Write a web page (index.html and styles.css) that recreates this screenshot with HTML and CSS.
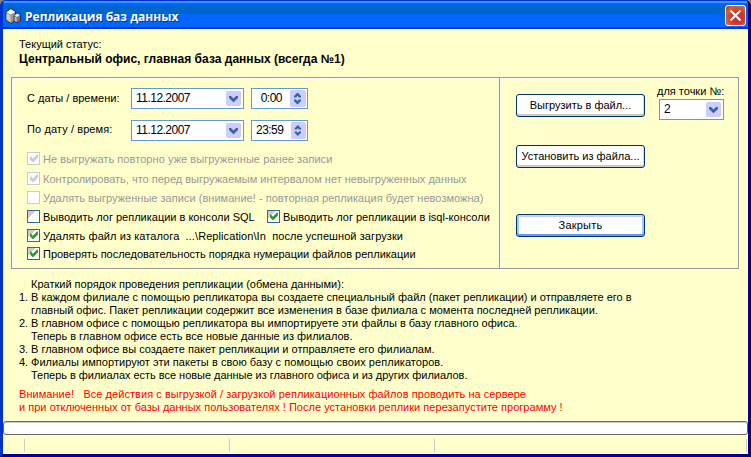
FILE: index.html
```html
<!DOCTYPE html>
<html lang="ru">
<head>
<meta charset="utf-8">
<title>Репликация баз данных</title>
<link rel="stylesheet" href="styles.css">
</head>
<body>
<svg width="0" height="0" class="defs">
  <symbol id="tick" viewBox="0 0 13 13"><path d="M3 4.500v3l2.500 2.500h1l4.500-4.500v-3h-1L5.900 6.700 4 4.500z" fill="currentColor"/></symbol>
  <symbol id="arrow" viewBox="0 0 15 15"><path d="M3 5h2l2.500 2.500L10 5h2v2L7.500 11.300 3 7z" fill="#336699"/></symbol>
  <symbol id="spin" viewBox="0 0 16 16"><path d="M7.500 2L11 5.500V7H9L7.500 5.500 6 7H4V5.500zM7.500 14L11 10.500V9H9L7.500 10.500 6 9H4v1.500z" fill="#336699"/></symbol>
</svg>
<div class="window">
  <header class="titlebar">
    <svg class="app-icon" width="16" height="16" viewBox="0 0 16 16">
      <path d="M1 4.500L5.500 .5l5 3V12L6 15.500 1 12z" fill="#999" stroke="#222" stroke-width=".8"/>
      <path d="M1.500 4.500L5.500 1.200l4.500 2.500L6 6.500z" fill="#fff"/>
      <path d="M1.500 5.500L5.500 7.500v7l-4-3z" fill="#ccc"/>
      <path d="M9 7.500l3-2.500 3.500 2v5.500L12 15l-3-2z" fill="#777" stroke="#222" stroke-width=".8"/>
      <path d="M9.500 7.500L12 5.500l3 1.500-3 2z" fill="#eee"/>
      <path d="M9.500 8.500l2.200 1.200v4.500L9.500 12.800z" fill="#bbb"/>
    </svg>
    <h1>Репликация баз данных</h1>
    <button class="close" aria-label="Закрыть окно"><svg width="19" height="19" viewBox="0 0 19 19"><path d="M4.500 4.500l10 10M14.500 4.500l-10 10" stroke="#fff" stroke-width="2.200"/></svg></button>
  </header>
  <main>
    <div class="status">
      <p>Текущий статус:</p>
      <p class="office">Центральный офис, главная база данных (всегда №1)</p>
    </div>
    <div class="panels">
      <section class="options">
        <div class="period">
          <label class="from">С даты / времени:</label>
          <div class="field date"><span>11.12.2007</span><svg class="drop"><use href="#arrow"/></svg></div>
          <div class="field time"><span>0:00</span><svg class="spin"><use href="#spin"/></svg></div>
          <label class="to">По дату / время:</label>
          <div class="field date"><span>11.12.2007</span><svg class="drop"><use href="#arrow"/></svg></div>
          <div class="field time"><span>23:59</span><svg class="spin"><use href="#spin"/></svg></div>
        </div>
        <div class="checks">
          <label class="check off w1"><i><svg><use href="#tick"/></svg></i>Не выгружать повторно уже выгруженные ранее записи</label>
          <label class="check off"><i><svg><use href="#tick"/></svg></i>Контролировать, что перед выгружаемым интервалом нет невыгруженных данных</label>
          <label class="check off w2"><i></i>Удалять выгруженные записи (внимание! - повторная репликация будет невозможна)</label>
          <div class="pair">
            <label class="check"><i></i>Выводить лог репликации в консоли SQL</label>
            <label class="check"><i><svg><use href="#tick"/></svg></i>Выводить лог репликации в isql-консоли</label>
          </div>
          <label class="check w3"><i><svg><use href="#tick"/></svg></i>Удалять файл из каталога&nbsp; ...\Replication\In&nbsp; после успешной загрузки</label>
          <label class="check w4"><i><svg><use href="#tick"/></svg></i>Проверять последовательность порядка нумерации файлов репликации</label>
        </div>
      </section>
      <section class="actions">
        <div class="buttons">
          <button class="btn">Выгрузить в файл...</button>
          <button class="btn">Установить из файла...</button>
          <button class="btn primary">Закрыть</button>
        </div>
        <div class="point">
          <label>для точки №:</label>
          <div class="field combo"><span>2</span><svg class="drop"><use href="#arrow"/></svg></div>
        </div>
      </section>
    </div>
    <div class="guide">
      <p>Краткий порядок проведения репликации (обмена данными):</p>
      <ol>
        <li><b>1.</b><div>В каждом филиале с помощью репликатора вы создаете специальный файл (пакет репликации) и отправляете его в<br>главный офис. Пакет репликации содержит все изменения в базе филиала с момента последней репликации.</div></li>
        <li><b>2.</b><div>В главном офисе с помощью репликатора вы импортируете эти файлы в базу главного офиса.<br>Теперь в главном офисе есть все новые данные из филиалов.</div></li>
        <li><b>3.</b><div>В главном офисе вы создаете пакет репликации и отправляете его филиалам.</div></li>
        <li><b>4.</b><div><span class="w5">Филиалы импортируют эти пакеты в свою базу с помощью своих репликаторов.</span><br><span class="w6">Теперь в филиалах есть все новые данные из главного офиса и из других филиалов.</span></div></li>
      </ol>
    </div>
    <p class="warning"><span class="w7">Внимание!&nbsp;&nbsp; Все действия с выгрузкой / загрузкой репликационных файлов проводить на сервере</span><br><span class="w8">и при отключенных от базы данных пользователях ! После установки реплики перезапустите программу !</span></p>
    <div class="progress"></div>
    <footer class="statusbar"><span></span><span></span><span></span><span></span></footer>
  </main>
</div>
</body>
</html>
```
FILE: styles.css
```css
* { box-sizing: border-box; }
body { margin: 0; background: #808080; font: 11px/13px "Liberation Sans", Arial, sans-serif; color: #000; }
h1, p, ol { margin: 0; padding: 0; list-style: none; font-weight: normal; }
.defs { display: block; }
.window {
  width: 751px; height: 457px; display: flex; flex-direction: column;
  border-style: solid; border-width: 0 3px 3px; border-color: #0033cc #000099 #000099 #0033cc;
  border-radius: 6px 6px 0 0; background: #0066ff; overflow: hidden;
}
.titlebar {
  flex: none; height: 29px; margin: 0 -2px; padding: 0 4px 1px 4px; display: flex; align-items: center;
  background: linear-gradient(#0033cc 0 1px, #3399ff 1px 3px, #0066ff 3px 5px, #0066cc 5px 14px, #0066ff 14px 27px, #0033cc 27px);
}
.app-icon { margin-top: 3px; }
h1 {
  flex: 1; margin: 5px 0 0 4px; white-space: nowrap; color: #fff;
  font: bold 12px/16px "Open Sans", sans-serif; text-shadow: 1px 1px 0 #003399;
}
.close {
  width: 21px; height: 21px; margin: 3px 0 0; padding: 0; border: 1px solid #fff; border-radius: 3px;
  background: radial-gradient(circle at 60% 60%, #cc3333 0 35%, #cc6633 70%, #cc3300);
}
.close svg { display: block; }
main {
  flex: 1; display: flex; flex-direction: column; background: #ffffcc; padding-top: 8px;
  box-shadow: -1px 0 #0066ff, 1px 0 #0033cc, 0 1px #0033ff;
}
.status { margin-left: 16px; line-height: 15px; height: 40px; white-space: nowrap; }
.office { font-weight: bold; font-size: 12px; line-height: 15px; letter-spacing: .02px; }
.panels { display: flex; width: 728px; height: 192px; margin-left: 8px; border: 1px solid #999; box-shadow: 1px 1px #fff, inset 1px 1px #fff; }
.options { width: 488px; padding: 10px 0 0 15px; border-right: 1px solid #999; box-shadow: 1px 0 #fff; }
.period { display: grid; grid-template-columns: 104px 113px 57px; row-gap: 11px; height: 53px; line-height: 21px; }
.period .time { margin-left: 7px; width: 57px; }
.to { margin-top: -1px; letter-spacing: .1px; }
.field { display: flex; align-items: center; justify-content: space-between; height: 21px; padding: 0 2px 0 4px; border: 1px solid #6699cc; background: #fff; line-height: 19px; }
.field span { font-size: 12px; letter-spacing: -.52px; }
.field svg { display: block; background: #ccccff; border-radius: 2px; }
.drop { width: 15px; height: 15px; }
.spin { width: 16px; height: 17px; }
.time { padding-right: 1px; }
.time span { flex: 1; text-align: right; padding-right: 8px; }
.checks { display: flex; flex-direction: column; gap: 6px; margin-top: 11px; white-space: nowrap; }
.check { display: flex; height: 13px; line-height: 15px; }
.check i { width: 13px; height: 13px; margin-right: 3px; border: 1px solid #336699; background: linear-gradient(135deg, #ccc 0 35%, #fff 36%); }
.check svg { display: block; width: 13px; height: 13px; margin: -1px; color: #339933; }
.off { color: #999; }
.off i { border-color: #ccc; background: #fff; }
.off svg { color: #ccc; }
.w1 { margin-bottom: 1px; letter-spacing: .06px; }
.w2 { letter-spacing: .03px; }
.w3 { letter-spacing: .08px; margin-bottom: -1px; }
.w4 { letter-spacing: -.01px; }
.pair { display: flex; }
.pair .check:first-child { width: 240px; }
.actions { display: flex; padding: 5px 0 0 16px; }
.buttons { display: flex; flex-direction: column; width: 129px; padding-top: 11px; }
.btn {
  flex: none; height: 23px; margin: 0 0 28px; padding: 0 0 1px; border: 1px solid #003366; border-radius: 3px;
  background: #fff; box-shadow: inset 0 -2px #cccccc, inset -1px 0 #ddd; font: inherit; color: #000; white-space: nowrap;
}
.btn:nth-child(2) { margin-bottom: 46px; }
.primary { box-shadow: inset 0 2px #ccccff, inset 0 -2px #6699ff, inset 2px 0 #99ccff, inset -2px 0 #99ccff; letter-spacing: .2px; }
.point { margin-left: 14px; width: 65px; white-space: nowrap; }
.point label { display: block; height: 16px; margin-left: -2px; line-height: 17px; }
.guide { margin: 9px 0 0 16px; white-space: nowrap; }
.guide p { margin-left: 12px; }
li { display: flex; }
li b { width: 12px; font-weight: normal; }
.w5 { letter-spacing: .05px; }
.w6 { letter-spacing: -.03px; }
.warning { margin: 6px 0 0 16px; color: #f00; white-space: nowrap; }
.w7 { letter-spacing: .05px; }
.w8 { letter-spacing: .025px; }
.progress { height: 14px; margin: 7px 0 0; border: 1px solid #666; border-radius: 3px; background: #fff; box-shadow: inset 0 1px #ccc; }
.statusbar { display: grid; grid-template-columns: 22px 205px 205px 312px; height: 13px; margin-top: 4px; }
.statusbar span { border-right: 1px solid #ccc; box-shadow: 1px 0 #fff; }
```
